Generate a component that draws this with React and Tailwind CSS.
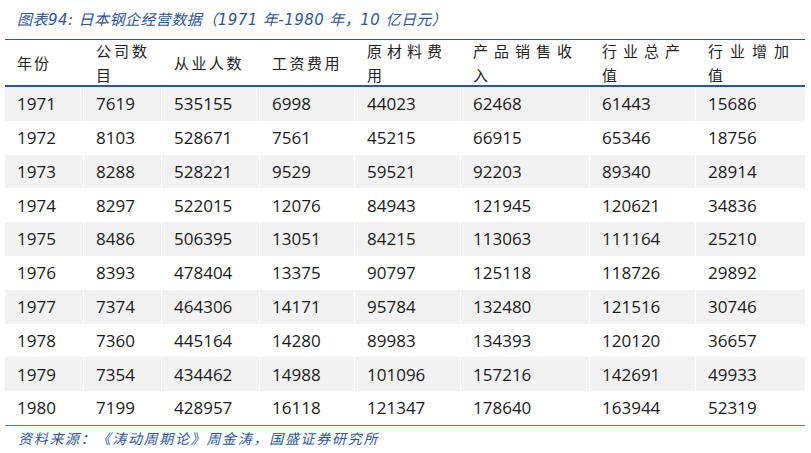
import React from "react";

const cols = [
  { w: "w-[79px]", h: ["年份"], ls: "tracking-[2px]" },
  { w: "w-[78px]", h: ["公司数", "目"], ls: "tracking-[3px]" },
  { w: "w-[98px]", h: ["从业人数"], ls: "tracking-[2.5px]" },
  { w: "w-[95px]", h: ["工资费用"], ls: "tracking-[2.5px]" },
  { w: "w-[106px]", h: ["原材料费", "用"], ls: "tracking-[5px]" },
  { w: "w-[129px]", h: ["产品销售收", "入"], ls: "tracking-[6px]" },
  { w: "w-[106px]", h: ["行业总产", "值"], ls: "tracking-[6px]" },
  { w: "w-[109px]", h: ["行业增加", "值"], ls: "tracking-[7px]" },
];

const rows = [
  ["1971", "7619", "535155", "6998", "44023", "62468", "61443", "15686"],
  ["1972", "8103", "528671", "7561", "45215", "66915", "65346", "18756"],
  ["1973", "8288", "528221", "9529", "59521", "92203", "89340", "28914"],
  ["1974", "8297", "522015", "12076", "84943", "121945", "120621", "34836"],
  ["1975", "8486", "506395", "13051", "84215", "113063", "111164", "25210"],
  ["1976", "8393", "478404", "13375", "90797", "125118", "118726", "29892"],
  ["1977", "7374", "464306", "14171", "95784", "132480", "121516", "30746"],
  ["1978", "7360", "445164", "14280", "89983", "134393", "120120", "36657"],
  ["1979", "7354", "434462", "14988", "101096", "157216", "142691", "49933"],
  ["1980", "7199", "428957", "16118", "121347", "178640", "163944", "52319"],
];

export default function App() {
  return (
    <div className="w-[811px] h-[453px] bg-white overflow-hidden relative">
      <div
        className="pl-[17px] pt-[9px] h-[39px] text-[15px] italic text-[#2f5597] leading-[22px] tracking-[0.45px] whitespace-nowrap"
        style={{ fontFamily: '"DejaVu Sans", "Noto Sans CJK SC", sans-serif' }}
      >
        图表94: 日本钢企经营数据（1971 年-1980 年，10 亿日元）
      </div>
      <div className="ml-[5px] w-[800px] border-t-[1.5px] border-[#2f5597]">
        <div
          className="flex h-[47px] border-b-2 border-[#2f5597] text-[15px] text-[#222]"
          style={{ fontFamily: '"Noto Sans CJK SC", sans-serif' }}
        >
          {cols.map((c, i) => (
            <div
              key={i}
              className={`${c.w} shrink-0 pl-[12px] flex flex-col justify-center leading-[24px] ${c.ls}`}
            >
              {c.h.map((t, j) => (
                <div key={j} className="whitespace-nowrap">
                  {t}
                </div>
              ))}
            </div>
          ))}
        </div>
        {rows.map((r, ri) => (
          <div
            key={ri}
            className={`flex h-[33.8px] text-[17px] text-[#1a1a1a] ${
              ri % 2 === 0 ? "bg-[#f2f2f2]" : "bg-white"
            }`}
            style={{ fontFamily: '"Open Sans", "Noto Sans", sans-serif' }}
          >
            {r.map((v, ci) => (
              <div
                key={ci}
                className={`${cols[ci].w} shrink-0 pl-[12px] flex items-center ${
                  ci < 7 ? "border-r border-white" : ""
                }`}
              >
                {v}
              </div>
            ))}
          </div>
        ))}
        <div className="border-t-[1.5px] border-[#4a7cc7]" />
      </div>
      <div
        className="pl-[18px] pt-[2px] text-[14px] italic text-[#2f5597] leading-[20px] tracking-[1.7px] whitespace-nowrap"
        style={{ fontFamily: '"Noto Sans CJK SC", sans-serif' }}
      >
        资料来源：《涛动周期论》周金涛，国盛证券研究所
      </div>
    </div>
  );
}
